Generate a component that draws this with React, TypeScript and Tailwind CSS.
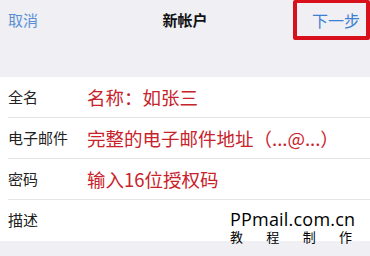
import React from "react";

const rows = [
  { label: "全名", hint: "名称：如张三" },
  { label: "电子邮件", hint: "完整的电子邮件地址（...@...）" },
  { label: "密码", hint: "输入16位授权码" },
  { label: "描述", hint: "" },
];

const App = () => {
  return (
    <div
      className="w-[370px] h-[256px] overflow-hidden bg-[#efeff4] relative"
      style={{ fontFamily: '"Noto Sans CJK SC", "Noto Sans", sans-serif' }}
    >
      {/* Nav bar */}
      <div className="relative flex items-center justify-between h-[40px] px-2">
        <span className="text-[15px] text-[#5b8fd4]">取消</span>
        <span className="absolute left-0 right-0 text-center text-[15px] font-bold text-[#111]">
          新帐户
        </span>
        <span className="text-[16px] text-[#3d7fd0] mr-[2px]">下一步</span>
        <div className="absolute left-[293px] top-0 w-[77px] h-[40px] border-4 border-t-[3px] border-[#d8101c] rounded-[2px]" />
      </div>

      <div className="h-[37px]" />

      {/* Form rows */}
      <div className="bg-white">
        {rows.map((row, i) => (
          <div key={row.label} className="pl-2">
            <div
              className={`flex items-center h-[41px] ${
                i < rows.length - 1 ? "border-b border-[#e4e4e8]" : ""
              }`}
            >
              <span className="w-[79px] shrink-0 text-[15px] text-[#222]">
                {row.label}
              </span>
              <span className="text-[18.5px] text-[#c8222a] whitespace-nowrap leading-none">
                {row.hint}
              </span>
            </div>
          </div>
        ))}
      </div>

      {/* Watermark */}
      <div className="absolute left-[230px] top-[210px] w-[123px] text-black">
        <div
          className="text-[18px] leading-[19px] tracking-[0.2px]"
          style={{ fontFamily: '"Open Sans", "Noto Sans", sans-serif' }}
        >
          PPmail.com.cn
        </div>
        <div className="flex justify-between text-[13px] leading-[14px] pr-[1px] mt-[1px]">
          <span>教</span>
          <span>程</span>
          <span>制</span>
          <span>作</span>
        </div>
      </div>
    </div>
  );
};

export default App;
